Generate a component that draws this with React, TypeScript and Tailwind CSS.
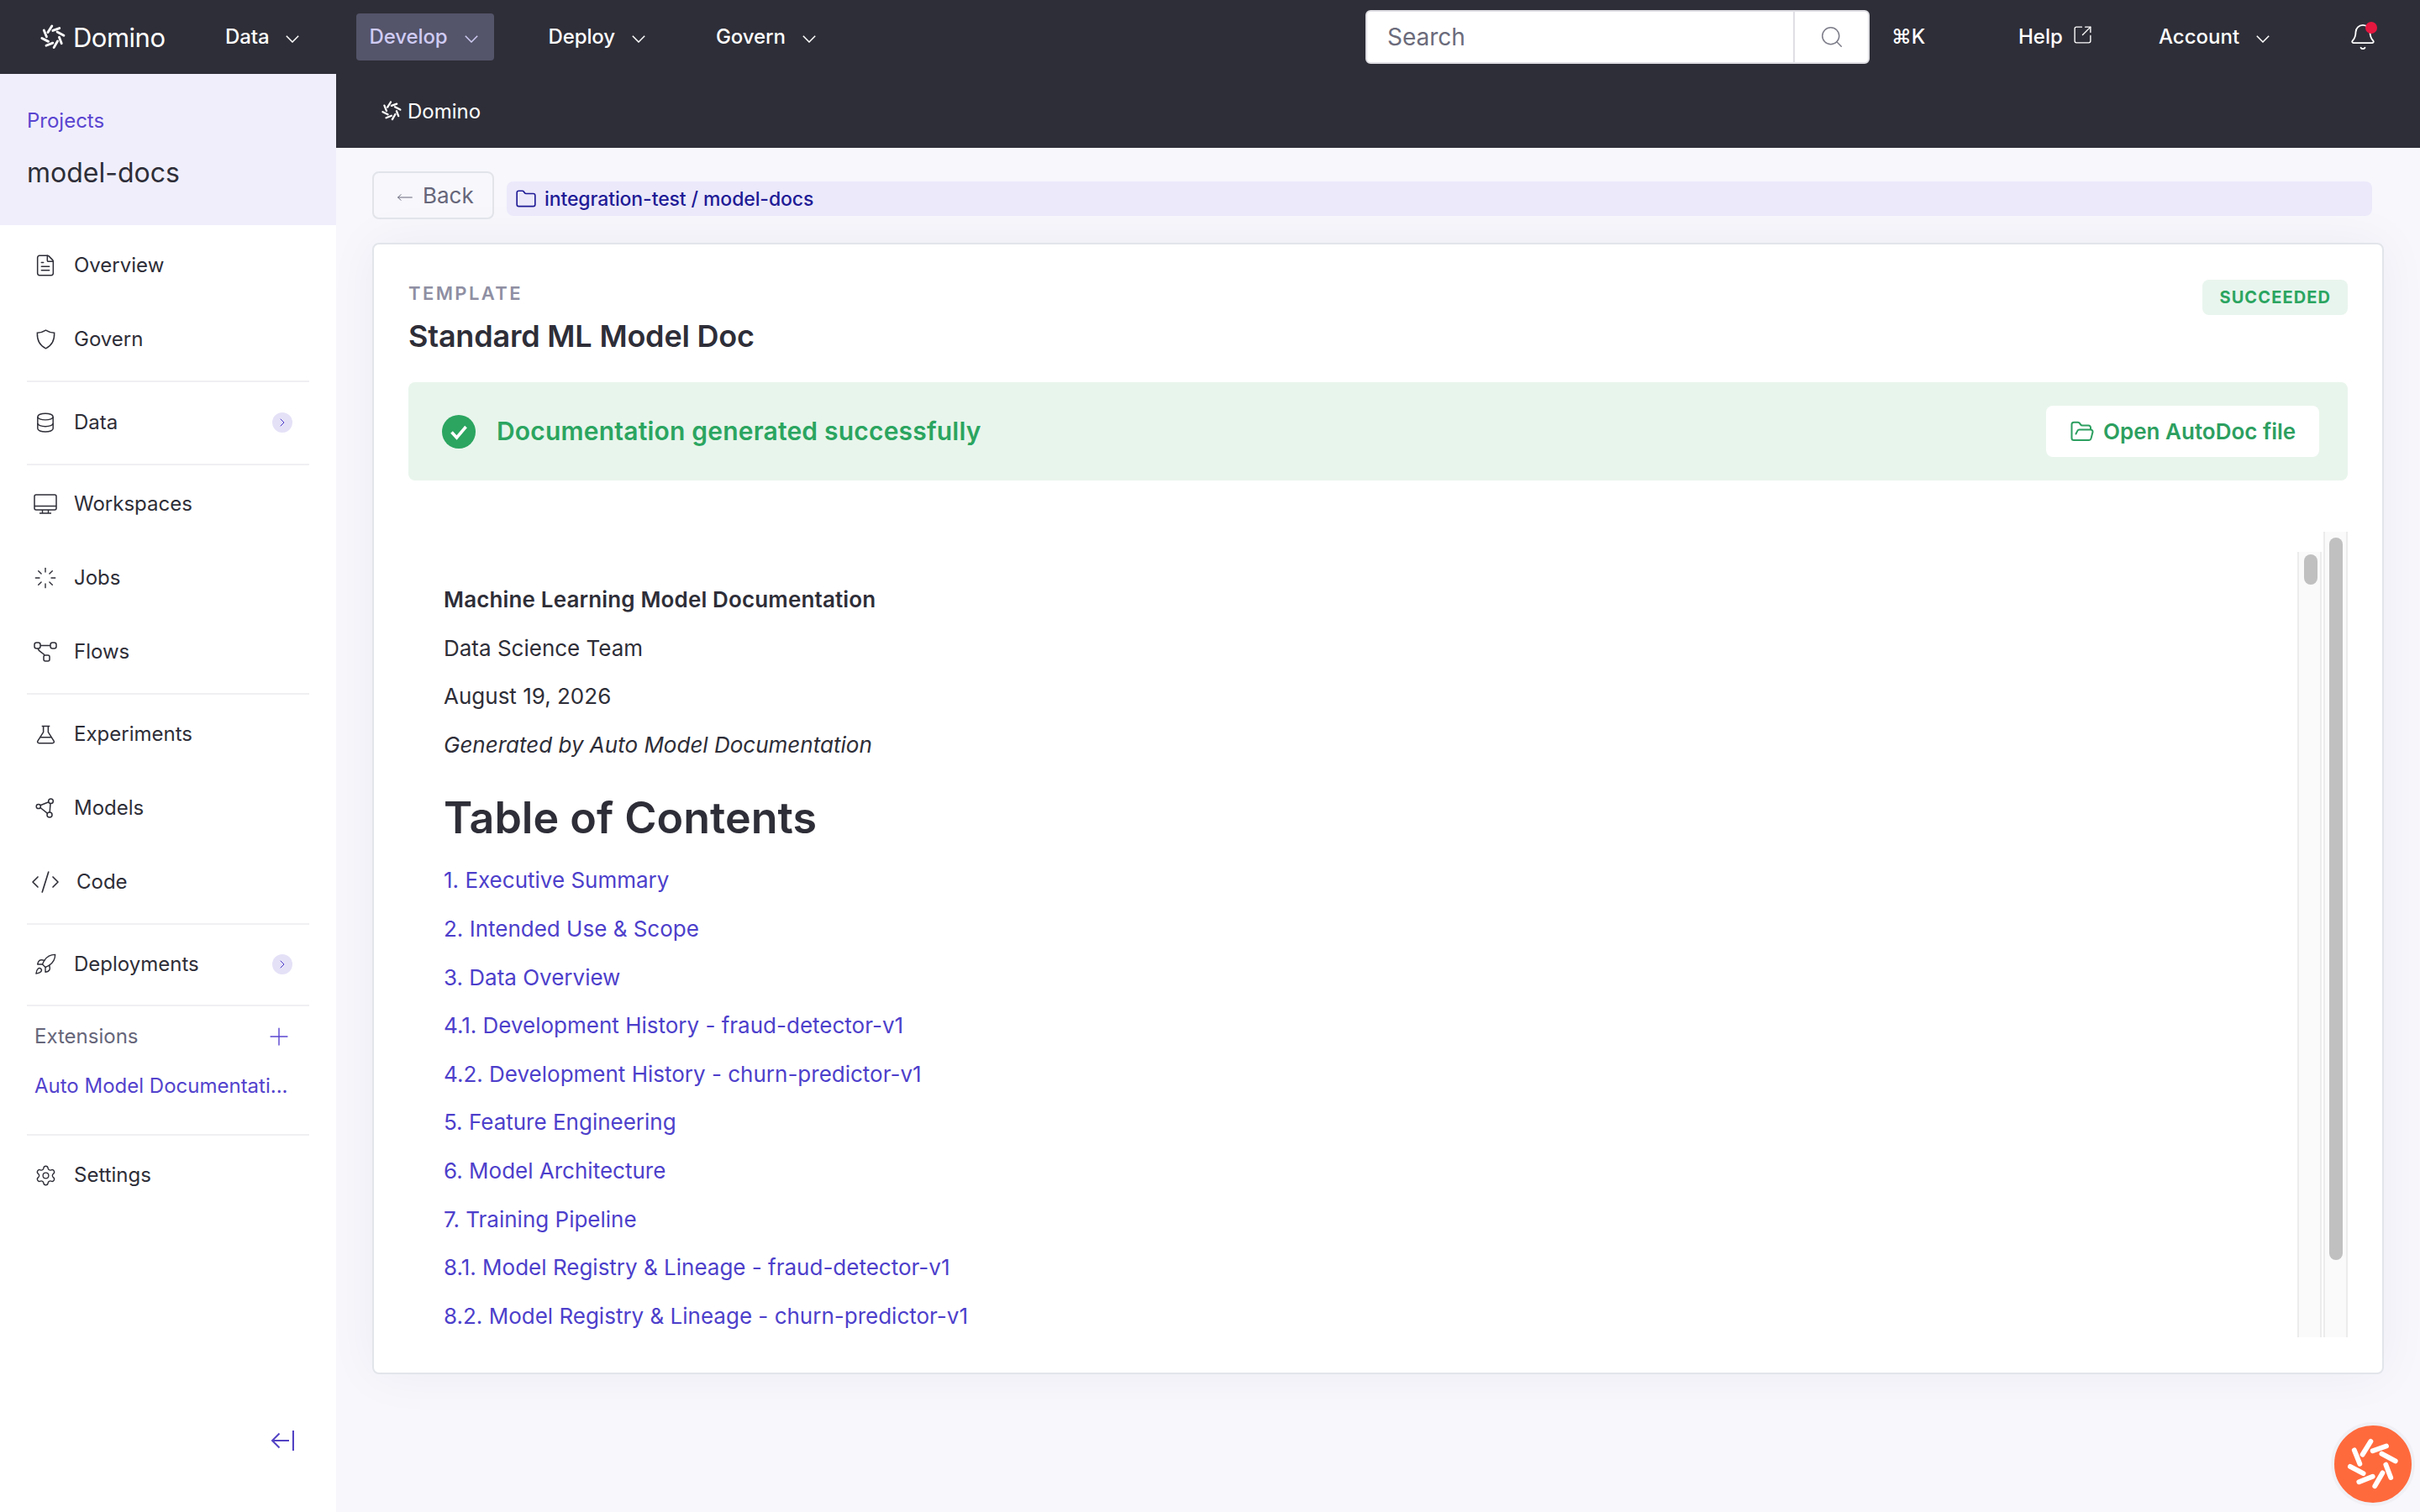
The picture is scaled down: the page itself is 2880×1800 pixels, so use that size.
import React from "react";
import { FileText, Loader, CodeXml, Rocket, Settings, Plus, FolderOpen, Folder, Bell, Search, SquareArrowOutUpRight, ChevronRight, MoveLeft } from "lucide-react";

function Pinwheel({ className, color = "#fff" }: { className?: string; color?: string }) {
  const rods = [
    [125, 128, 155, 80], [162, 115, 212, 97], [195, 125, 245, 152], [210, 165, 228, 212],
    [170, 243, 198, 195], [112, 228, 162, 208], [80, 172, 128, 197], [95, 112, 115, 162],
  ];
  return (
    <svg viewBox="68 68 190 190" className={className} fill="none">
      {rods.map((r, i) => (
        <line key={i} x1={r[0]} y1={r[1]} x2={r[2]} y2={r[3]} stroke={color} strokeWidth="18" strokeLinecap="round" />
      ))}
    </svg>
  );
}

const Chev = ({ className = "" }: { className?: string }) => (
  <svg viewBox="0 0 16 9" className={`w-[16px] h-[9px] shrink-0 ${className}`} fill="none" stroke="currentColor" strokeWidth="1.5">
    <path d="M.8.8L8 8l7.2-7.2" />
  </svg>
);

const Divider = ({ className = "" }: { className?: string }) => <div className={`mx-[32px] h-[2px] bg-[#f0f0f3] ${className}`} />;

const iconBase = "text-[#2e2e38]";
const IShield = () => (
  <svg viewBox="0 0 24 25" className="w-[23px] h-[24px]" fill="none" stroke="currentColor" strokeWidth="1.5">
    <path d="M12 1.2c3 2 6.5 3 10.6 3.2.3 8.8-2.6 15.6-10.6 19.4C4 20 1.1 13.2 1.4 4.4 5.5 4.2 9 3.2 12 1.2z" />
  </svg>
);
const IMonitor = () => (
  <svg viewBox="0 0 28 24" className="w-[28px] h-[24px]" fill="none" stroke="currentColor" strokeWidth="1.5">
    <rect x="1" y="1" width="26" height="18" rx="2" /><path d="M1 14.5h26M10.5 19v4M17.5 19v4M7 23h14" />
  </svg>
);
const IData = () => (
  <svg viewBox="0 0 24 26" className="w-[22px] h-[24px]" fill="none" stroke="currentColor" strokeWidth="1.6">
    <path d="M2 5.5C2 3 6.5 1.2 12 1.2S22 3 22 5.5V21c0 2.3-4.5 4-10 4S2 23.3 2 21z" />
    <path d="M2 5.5c0 2.4 4.5 4.1 10 4.1s10-1.7 10-4.1M2 14c0 2.4 4.5 4.1 10 4.1S22 16.4 22 14" />
  </svg>
);
const IFlows = () => (
  <svg viewBox="0 0 28 24" className="w-[28px] h-[24px]" fill="none" stroke="currentColor" strokeWidth="1.5">
    <rect x="1" y="1" width="7" height="7" rx="2.5" /><rect x="20" y="1" width="7" height="7" rx="2.5" /><rect x="12" y="16" width="7" height="7" rx="2" />
    <path d="M8 4.5h12M5 8c1 4 6 5 8 8" />
  </svg>
);
const IFlask = () => (
  <svg viewBox="0 0 24 24" className="w-[23px] h-[23px]" fill="none" stroke="currentColor" strokeWidth="1.6">
    <path d="M7 1.5h10M9 1.5v7.5L2 20c-.8 1.4 0 2.7 1.7 2.7h16.6c1.7 0 2.5-1.3 1.7-2.7L15 9V1.5M5 15.5h14" />
  </svg>
);
const IModels = () => (
  <svg viewBox="0 0 24 24" className="w-[24px] h-[24px]" fill="none" stroke="currentColor" strokeWidth="1.5">
    <circle cx="3.8" cy="10" r="2.6" /><circle cx="18.5" cy="3.8" r="2.8" /><circle cx="17" cy="20" r="3" />
    <path d="M6 8.8l10-4M6 11.5l8.6 6.8M18 6.6l-.8 10.4" />
  </svg>
);
const ICollapse = () => (
  <svg viewBox="0 0 28 26" className="w-[28px] h-[26px] text-[#5343c4]" fill="none" stroke="currentColor" strokeWidth="2">
    <path d="M22 13H2M10.5 4.5L2 13l8.5 8.5" /><path d="M27 1v24" strokeWidth="2.2" />
  </svg>
);
const Check = () => (
  <svg viewBox="0 0 40 40" className="w-[40px] h-[40px] shrink-0">
    <circle cx="20" cy="20" r="20" fill="#2ba560" /><path d="M11.5 20.5l6 6.5 11-13" fill="none" stroke="#fff" strokeWidth="3.6" />
  </svg>
);

const Item = ({ icon, label, badge, tx = "" }: { icon: React.ReactNode; label: string; badge?: boolean; tx?: string }) => (
  <div className="relative h-[88px] flex items-center text-[24px] text-[#2e2e38]">
    <div className="w-[108px] pl-[40px] pr-[40px] shrink-0 flex justify-center">
      <div className="w-[28px] flex justify-center shrink-0">{icon}</div>
    </div>
    <span className={`-ml-[20px] ${tx}`}>{label}</span>
    {badge && (
      <span className="ml-auto mr-[52px] w-[24px] h-[24px] rounded-full bg-[#e4e1f7] flex items-center justify-center">
        <ChevronRight className="w-[16px] h-[16px] text-[#4b3ac8]" strokeWidth={1.5} />
      </span>
    )}
  </div>
);

const NavItem = ({ label, active, pad }: { label: string; active?: boolean; pad: string }) => (
  <div className={`${pad} h-[56px] flex items-center gap-[20px] rounded-[4px] text-[24px] font-medium tracking-[-0.1px] ${active ? "bg-[#54546a] text-[#cfcbf3]" : "text-white"}`}>
    <span>{label}</span>
    <Chev className="mt-[4px]" />
  </div>
);

const Link = ({ t }: { t: string }) => <p className="h-[44.8px] mb-[12.8px] leading-[44.8px] text-[#4d3fcb]">{t}</p>;

export default function App() {
  const links = [
    "1. Executive Summary", "2. Intended Use & Scope", "3. Data Overview", "4.1. Development History - fraud-detector-v1",
    "4.2. Development History - churn-predictor-v1", "5. Feature Engineering", "6. Model Architecture", "7. Training Pipeline",
    "8.1. Model Registry & Lineage - fraud-detector-v1", "8.2. Model Registry & Lineage - churn-predictor-v1",
  ];
  return (
    <div className="relative w-full h-screen overflow-hidden flex flex-col bg-[#f7f7fc] font-['Inter',sans-serif] text-[#2e2e38]">
      <header className="h-[88px] shrink-0 bg-[#2e2e38] flex items-center text-white">
        <div className="ml-[48px] flex items-center w-[204px] shrink-0">
          <Pinwheel className="w-[30px] h-[30px]" />
          <span className="ml-[9px] text-[31px] leading-none tracking-[-0.5px]">Domino</span>
        </div>
        <div className="ml-[16px]"><NavItem label="Data" pad="" /></div>
        <div className="ml-[68px]"><NavItem label="Develop" active pad="w-[164px] pl-[15px]" /></div>
        <div className="ml-[64px]"><NavItem label="Deploy" pad="" /></div>
        <div className="ml-[84px]"><NavItem label="Govern" pad="" /></div>
        <div className="ml-auto w-[600px] h-[64px] rounded-[6px] bg-white border-2 border-[#dfdfe4] flex items-stretch shrink-0 mr-[26px]">
          <div className="flex-1 pl-[24px] flex items-center text-[28px] text-[#6b6b7b]">Search</div>
          <div className="w-[89px] border-l-2 border-[#dfdfe4] flex items-center justify-center">
            <Search className="w-[30px] h-[30px] text-[#7d7d8a]" strokeWidth={1.2} />
          </div>
        </div>
        <span className="text-[24px] font-medium w-[151px] shrink-0">⌘K</span>
        <div className="flex items-center gap-[11px] w-[167px] shrink-0 text-[24px] font-medium">
          <span>Help</span>
          <SquareArrowOutUpRight className="w-[25px] h-[25px] -mt-[6px]" strokeWidth={1.3} />
        </div>
        <div className="flex items-center gap-[20px] text-[24px] font-medium shrink-0 w-[229px]">
          <span>Account</span>
          <Chev className="mt-[4px]" />
        </div>
        <div className="relative w-[82px] shrink-0">
          <Bell className="w-[34px] h-[34px] -ml-[3px]" strokeWidth={1.3} />
          <span className="absolute -top-[1px] left-[17px] w-[14px] h-[14px] rounded-full bg-[#e5173f]" />
        </div>
      </header>

      <div className="flex-1 flex min-h-0">
        <aside className="w-[400px] shrink-0 bg-white flex flex-col">
          <div className="h-[180px] bg-[#f0eefb] pl-[32px] pt-[40px]">
            <div className="text-[24px] leading-[32px] text-[#5a45d0]">Projects</div>
            <div className="mt-[24px] text-[32px] leading-[44px] text-[#2e2e38]">model-docs</div>
          </div>
          <div className="pt-[4px] flex-1 flex flex-col">
            <Item icon={<FileText className={`w-[28px] h-[28px] ${iconBase}`} strokeWidth={1.3} />} label="Overview" />
            <Item icon={<span className={iconBase}><IShield /></span>} label="Govern" />
            <Divider className="mt-[5px] mb-[4px]" />
            <Item icon={<IData />} label="Data" badge />
            <Divider className="mt-[5px] mb-[2px]" />
            <Item icon={<IMonitor />} label="Workspaces" />
            <Item icon={<Loader className={`w-[28px] h-[28px] ${iconBase}`} strokeWidth={1.2} />} label="Jobs" />
            <Item icon={<IFlows />} label="Flows" />
            <Divider className="mt-[5px] mb-[3px]" />
            <Item icon={<IFlask />} label="Experiments" />
            <Item icon={<IModels />} label="Models" />
            <Item icon={<CodeXml className={`w-[36px] h-[36px] shrink-0 ${iconBase}`} strokeWidth={1.1} />} label="Code" tx="ml-[-17px]" />
            <Divider className="mt-[5px] mb-[3px]" />
            <Item icon={<Rocket className={`w-[28px] h-[28px] ${iconBase}`} strokeWidth={1.2} />} label="Deployments" badge />
            <Divider className="mt-[4px] mb-0" />
            <div className="h-[71px] pl-[41px] pr-[51px] flex items-center justify-between text-[24px] text-[#66667a]">
              <span>Extensions</span>
              <Plus className="w-[34px] h-[34px] text-[#5a45d0]" strokeWidth={1} />
            </div>
            <div className="pl-[41px] h-[48px] flex items-center text-[24px] text-[#5343cd] whitespace-nowrap">Auto Model Documentati...</div>
            <Divider className="mt-[33px] mb-[3px]" />
            <Item icon={<Settings className={`w-[27px] h-[27px] ${iconBase}`} strokeWidth={1.2} />} label="Settings" />
            <div className="mt-auto pb-[72px] pl-[322px]">
              <ICollapse />
            </div>
          </div>
        </aside>

        <main className="flex-1 min-w-0 flex flex-col">
          <div className="h-[88px] bg-[#2e2e38] flex items-center pl-[54px] text-white text-[24px]">
            <Pinwheel className="w-[24px] h-[24px]" />
            <span className="ml-[7px] mt-[1px]">Domino</span>
          </div>
          <div className="pt-[28px] pl-[43px] pr-[43px]">
            <div className="flex items-start gap-[15px] pr-[14px]">
              <button className="w-[145px] h-[57px] rounded-[8px] border-2 border-[#e2e4ea] flex items-center pl-[24px] text-[26px] text-[#66667a]">
                <MoveLeft className="w-[26px] h-[20px] mt-[4px] mr-[8px]" strokeWidth={1.2} />
                <span>Back</span>
              </button>
              <div className="mt-[12px] flex-1 h-[41px] rounded-[8px] bg-[#ebe9fa] flex items-center pl-[10px] text-[23px] font-medium tracking-[-0.1px] text-[#1f1b96]">
                <Folder className="w-[26px] h-[26px] mr-[9px]" strokeWidth={1.5} />
                <span className="mt-[1px]">integration-test / model-docs</span>
              </div>
            </div>

            <section className="mt-[28px] h-[1347px] rounded-[8px] border-2 border-[#e2e5ea] bg-white pt-[42px] pl-[41px] pr-[41px] shadow-[0_0_60px_rgba(40,40,70,0.05)]">
              <div className="flex items-start justify-between">
                <div>
                  <div className="mt-[2px] text-[22px] leading-[28px] font-semibold tracking-[2.4px] text-[#8f8fa3]">TEMPLATE</div>
                  <h2 className="mt-[13px] text-[36px] leading-[48px] font-semibold tracking-[-0.2px] text-[#2e2e38]">Standard ML Model Doc</h2>
                </div>
                <div className="h-[42px] px-[20px] rounded-[8px] bg-[#e8f5ee] flex items-center text-[20px] font-bold tracking-[1.1px] text-[#2ba560]">SUCCEEDED</div>
              </div>

              <div className="mt-[31px] h-[117px] rounded-[8px] bg-[#e8f5ec] flex items-center pl-[40px] pr-[34px]">
                <Check />
                <span className="ml-[25px] text-[30px] font-semibold tracking-[0.2px] text-[#2ba560]">Documentation generated successfully</span>
                <button className="ml-auto w-[325px] h-[61px] rounded-[8px] bg-white flex items-center pl-[28px] text-[26px] font-semibold text-[#2c9f60]">
                  <FolderOpen className="w-[30px] h-[30px] mr-[10px]" strokeWidth={1.6} />
                  <span>Open AutoDoc file</span>
                </button>
              </div>

              <div className="mt-[61px] h-[959px] flex items-start gap-[2px]">
                <div className="mt-[24px] h-[935px] flex-1 min-w-0 flex items-start">
                  <div className="flex-1 h-full overflow-hidden pl-[42px] pt-[35px] text-[26px] text-[#2e2e38]">
                    <p className="h-[44.8px] mb-[12.8px] leading-[44.8px] font-semibold tracking-[0.15px]">Machine Learning Model Documentation</p>
                    <p className="h-[44.8px] mb-[12.8px] leading-[44.8px]">Data Science Team</p>
                    <p className="h-[44.8px] mb-[12.8px] leading-[44.8px]">August 19, 2026</p>
                    <p className="h-[44.8px] mb-[12.8px] leading-[44.8px] italic">Generated by Auto Model Documentation</p>
                    <h1 className="h-[104px] leading-[104px] text-[52px] font-semibold">Table of Contents</h1>
                    {links.map((t) => <Link key={t} t={t} />)}
                  </div>
                  <div className="w-[29px] h-full shrink-0 border-x-2 border-[#ececec] bg-[#fafafa] pl-[6px] pt-[3px]">
                    <div className="w-[16px] h-[36px] rounded-full bg-[#c0c0c0]" />
                  </div>
                </div>
                <div className="w-[29px] h-full shrink-0 border-x-2 border-[#ececec] bg-[#fafafa] pl-[5px] pt-[7px]">
                  <div className="w-[16px] h-[860px] rounded-full bg-[#c0c0c0]" />
                </div>
              </div>
            </section>
          </div>
        </main>
      </div>

      <div className="absolute left-[2774px] top-[1693px] w-[100px] h-[100px] rounded-full bg-[#ff6a3d] border-[4px] border-[#f0f0f5] flex items-center justify-center">
        <Pinwheel className="w-[62px] h-[62px]" />
      </div>
    </div>
  );
}
